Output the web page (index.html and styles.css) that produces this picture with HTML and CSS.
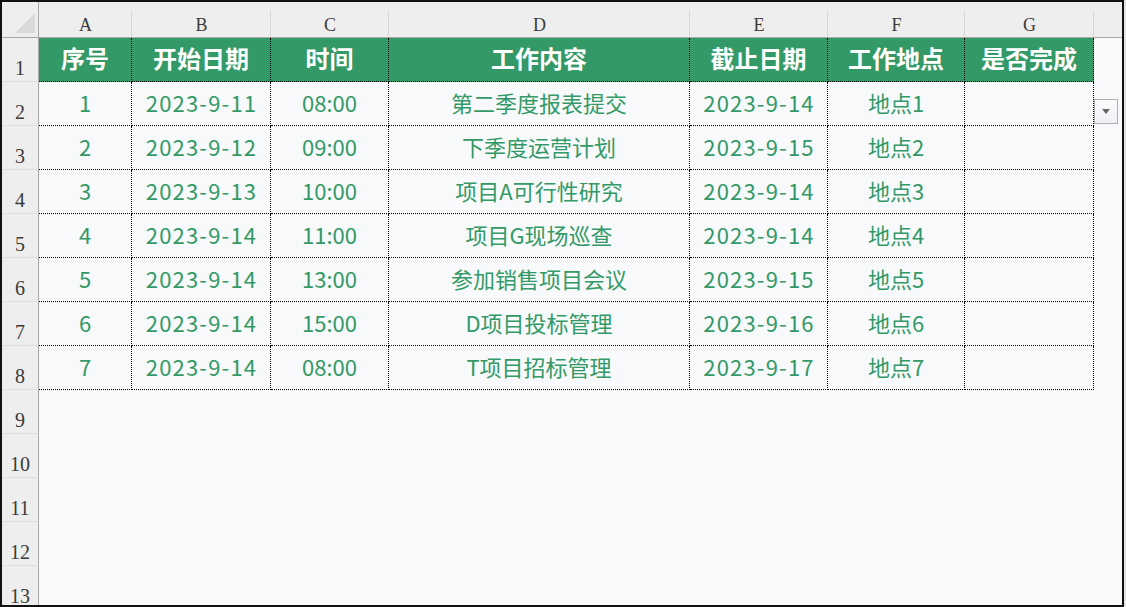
FILE: index.html
```html
<!DOCTYPE html>
<html lang="zh-CN">
<head>
    <meta charset="UTF-8">
    <title>工作计划表</title>
    <link rel="stylesheet" href="styles.css">
</head>
<body>

<div class="frame">
    <div class="sheet">
        <div class="corner">
            <svg width="36" height="35" viewBox="0 0 36 35"><polygon points="13,31 33,11 33,31" fill="#dadada"/></svg>
        </div>
        <div class="col-head">A</div>
        <div class="col-head">B</div>
        <div class="col-head">C</div>
        <div class="col-head">D</div>
        <div class="col-head">E</div>
        <div class="col-head">F</div>
        <div class="col-head">G</div>
        <div class="col-head blank"></div>

        <div class="row-head">1</div>
        <div class="cell title">序号</div>
        <div class="cell title">开始日期</div>
        <div class="cell title">时间</div>
        <div class="cell title">工作内容</div>
        <div class="cell title">截止日期</div>
        <div class="cell title">工作地点</div>
        <div class="cell title">是否完成</div>
        <div class="rest"></div>

        <div class="row-head">2</div>
        <div class="cell">1</div>
        <div class="cell date">2023-9-11</div>
        <div class="cell">08:00</div>
        <div class="cell">第二季度报表提交</div>
        <div class="cell date">2023-9-14</div>
        <div class="cell">地点1</div>
        <div class="cell"></div>
        <div class="rest"></div>

        <div class="row-head">3</div>
        <div class="cell">2</div>
        <div class="cell date">2023-9-12</div>
        <div class="cell">09:00</div>
        <div class="cell">下季度运营计划</div>
        <div class="cell date">2023-9-15</div>
        <div class="cell">地点2</div>
        <div class="cell"></div>
        <div class="rest"></div>

        <div class="row-head">4</div>
        <div class="cell">3</div>
        <div class="cell date">2023-9-13</div>
        <div class="cell">10:00</div>
        <div class="cell">项目A可行性研究</div>
        <div class="cell date">2023-9-14</div>
        <div class="cell">地点3</div>
        <div class="cell"></div>
        <div class="rest"></div>

        <div class="row-head">5</div>
        <div class="cell">4</div>
        <div class="cell date">2023-9-14</div>
        <div class="cell">11:00</div>
        <div class="cell">项目G现场巡查</div>
        <div class="cell date">2023-9-14</div>
        <div class="cell">地点4</div>
        <div class="cell"></div>
        <div class="rest"></div>

        <div class="row-head">6</div>
        <div class="cell">5</div>
        <div class="cell date">2023-9-14</div>
        <div class="cell">13:00</div>
        <div class="cell">参加销售项目会议</div>
        <div class="cell date">2023-9-15</div>
        <div class="cell">地点5</div>
        <div class="cell"></div>
        <div class="rest"></div>

        <div class="row-head">7</div>
        <div class="cell">6</div>
        <div class="cell date">2023-9-14</div>
        <div class="cell">15:00</div>
        <div class="cell">D项目投标管理</div>
        <div class="cell date">2023-9-16</div>
        <div class="cell">地点6</div>
        <div class="cell"></div>
        <div class="rest"></div>

        <div class="row-head">8</div>
        <div class="cell">7</div>
        <div class="cell date">2023-9-14</div>
        <div class="cell">08:00</div>
        <div class="cell">T项目招标管理</div>
        <div class="cell date">2023-9-17</div>
        <div class="cell">地点7</div>
        <div class="cell"></div>
        <div class="rest"></div>

        <div class="row-head">9</div>
        <div class="empty"></div>
        <div class="row-head">10</div>
        <div class="empty"></div>
        <div class="row-head">11</div>
        <div class="empty"></div>
        <div class="row-head">12</div>
        <div class="empty"></div>
        <div class="row-head">13</div>
        <div class="empty"></div>
    </div>

    <div class="dropdown"><span class="arrow"></span></div>
</div>

</body>
</html>
```

FILE: styles.css
```css
* {
    box-sizing: border-box;
}
body {
    margin: 0;
    background-color: #e4e4e4;
    font-family: "Noto Sans CJK SC", "Noto Sans", sans-serif;
}
.frame {
    position: relative;
    width: 1124px;
    height: 607px;
    border: 2px solid #111;
    background-color: #f7f9fb;
    overflow: hidden;
}
.sheet {
    display: grid;
    grid-template-columns: 37px 93px 139px 118px 301px 138px 137px 129px 1fr;
    grid-template-rows: 36px repeat(13, 44px);
}
.corner {
    background-color: #eeeeee;
    border-right: 1px solid #a8a8a8;
    border-bottom: 1px solid #a8a8a8;
}
.corner svg {
    display: block;
}
.col-head {
    background: #eeeeee linear-gradient(#d6d6d6, #d6d6d6) right bottom / 1px 26px no-repeat;
    border-bottom: 1px solid #a8a8a8;
    font-family: "Liberation Serif", serif;
    font-size: 18px;
    color: #3c3c3c;
    display: flex;
    align-items: flex-end;
    justify-content: center;
    padding-bottom: 1px;
}
.col-head.blank {
    background: #eeeeee;
}
.row-head {
    background-color: #eeeeee;
    border-right: 1px solid #a8a8a8;
    border-bottom: 1px solid #dcdcdc;
    font-family: "Liberation Serif", serif;
    font-size: 20px;
    color: #3a3a3a;
    display: flex;
    align-items: flex-end;
    justify-content: center;
    padding-bottom: 1px;
}
.cell {
    border-right: 1px dotted #000;
    border-bottom: 1px dotted #000;
    display: flex;
    align-items: center;
    justify-content: center;
    padding-bottom: 4px;
    font-size: 22px;
    color: #339966;
    white-space: nowrap;
}
.cell.date {
    letter-spacing: 1.2px;
    padding-left: 1px;
}
.cell.title {
    background-color: #339966;
    color: #fff;
    font-weight: bold;
    font-size: 24px;
}
.empty {
    grid-column: span 8;
}
.dropdown {
    position: absolute;
    left: 1092px;
    top: 97px;
    width: 24px;
    height: 25px;
    border: 1px solid #b0b0b0;
    background: linear-gradient(#fbfbfc, #eef0f6);
    display: flex;
    align-items: center;
    justify-content: center;
}
.arrow {
    width: 0;
    height: 0;
    border-left: 4px solid transparent;
    border-right: 4px solid transparent;
    border-top: 5px solid #666;
}
```
